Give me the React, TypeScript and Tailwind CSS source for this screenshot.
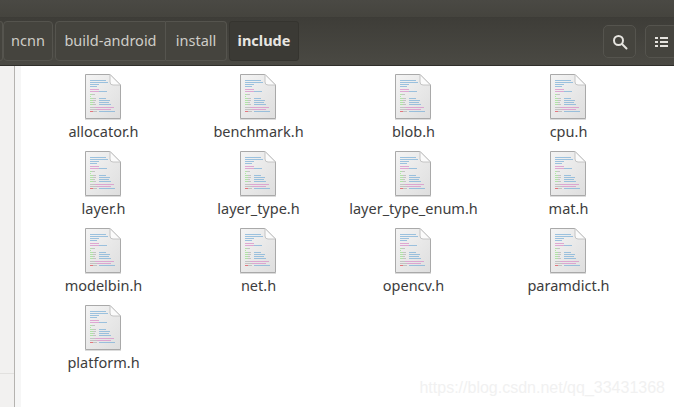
const files = [
  "allocator.h", "benchmark.h", "blob.h", "cpu.h",
  "layer.h", "layer_type.h", "layer_type_enum.h", "mat.h",
  "modelbin.h", "net.h", "opencv.h", "paramdict.h",
  "platform.h",
];

const blue = "#7fb2d8";
const pink = "#d890c8";
const green = "#9be08f";
const gray = "#b5b5b5";
const red = "#e0505a";

// [y, x, width, colour]
const codeLines: [number, number, number, string][] = [
  [6, 5, 16, blue], [8, 5, 18, blue], [10, 5, 9, blue], [12, 5, 7, blue],
  [15, 5, 9, pink], [17, 5, 9, pink], [17, 14, 8, blue],
  [20, 5, 2, green], [20, 7, 3, gray], [22, 5, 1, green],
  [24, 5, 3, green], [24, 8, 3, gray], [24, 14, 7, blue],
  [26, 5, 3, green], [26, 8, 3, gray], [26, 14, 11, blue],
  [28, 5, 3, green], [28, 8, 2, gray], [28, 14, 10, blue],
  [30, 5, 3, green], [30, 8, 3, gray], [30, 14, 12, blue],
  [33, 5, 5, gray], [33, 10, 19, pink], [35, 5, 7, gray], [35, 12, 14, pink],
  [37, 5, 3, red], [37, 8, 4, gray], [37, 14, 16, blue],
];

function FileIcon() {
  return (
    <svg width="37" height="46" viewBox="0 0 37 46" className="shrink-0">
      <defs>
        <linearGradient id="page" x1="0" y1="0" x2="1" y2="1">
          <stop offset="0" stopColor="#f4f4f4" />
          <stop offset="1" stopColor="#dedede" />
        </linearGradient>
      </defs>
      <path d="M0.5 0.5H25L35.5 11V44.5H0.5Z" fill="url(#page)" stroke="#a9a9a9" />
      <path d="M0 45.5H36" stroke="#dcdcdc" />
      <path d="M25 0.5V8Q25 11 28 11H35.5Z" fill="#fbfbfb" stroke="#c4c4c4" />
      {codeLines.map(([y, x, w, c], i) => (
        <rect key={i} x={x} y={y} width={w} height="1" fill={c} opacity="0.75" />
      ))}
    </svg>
  );
}

export default function App() {
  return (
    <div className="w-[674px] h-[407px] overflow-hidden flex flex-col relative bg-white font-['Noto_Sans',sans-serif]">
      <div className="h-[18px] shrink-0 bg-gradient-to-b from-[#4a4944] to-[#45443e] border-b border-[#3d3c37]" />
      <div className="h-[48px] shrink-0 flex items-start justify-between bg-gradient-to-b from-[#3e3d38] to-[#4a4943] border-b border-[#2f2e2a] pt-[3px]">
        <div className="flex items-stretch h-[40px] text-[14.5px] text-[#cfcdc8]">
          <div className="w-[3px] border-y border-r border-[#55544e] bg-[#45443e] rounded-r-[3px]" />
          <div className="w-[50px] flex items-center justify-center border border-[#55544e] bg-[#45443e] rounded-[4px]">ncnn</div>
          <div className="w-[111px] ml-[2px] flex items-center justify-center border border-[#55544e] bg-[#45443e] rounded-l-[4px]">build-android</div>
          <div className="w-[61px] flex items-center justify-center border border-l-0 border-[#55544e] bg-[#45443e] rounded-r-[4px]">install</div>
          <div className="w-[70px] ml-[2px] flex items-center justify-center border border-[#35342f] bg-[#3b3a35] rounded-[3px] font-bold text-[#e8e6e2]">
            include
          </div>
        </div>
        <div className="flex gap-[9px] mr-[-4px] mt-[4px]">
          <div className="w-[33px] h-[33px] flex items-center justify-center border border-[#55544e] bg-[#45443e] rounded-[5px]">
            <svg width="16" height="16" viewBox="0 0 16 16" fill="none" stroke="#e6e4df" strokeWidth="2">
              <circle cx="6.5" cy="6.5" r="4.5" />
              <path d="M10 10L14.5 14.5" strokeLinecap="round" />
            </svg>
          </div>
          <div className="w-[33px] h-[33px] flex items-center justify-center border border-[#55544e] bg-[#45443e] rounded-[5px]">
            <svg width="13" height="12" viewBox="0 0 13 12" fill="#e6e4df">
              <rect x="0" y="1" width="3" height="2" />
              <rect x="5" y="1" width="8" height="2" />
              <rect x="0" y="5" width="3" height="2" />
              <rect x="5" y="5" width="8" height="2" />
              <rect x="0" y="9" width="3" height="2" />
              <rect x="5" y="9" width="8" height="2" />
            </svg>
          </div>
        </div>
      </div>
      <div className="flex flex-1 min-h-0">
        <div className="w-[15px] shrink-0 bg-[#f2f1f0] border-r border-[#b5b3b0] flex flex-col">
          <div className="h-[308px] border-b border-[#e2e1df]" />
        </div>
        <div className="w-[6px] shrink-0 bg-[#f6f6f6]" />
        <div className="flex-1 grid grid-cols-[155px_155px_155px_155px] auto-rows-[77px] pl-[5px] pt-[8px] content-start">
          {files.map((f) => (
            <div key={f} className="flex flex-col items-center">
              <FileIcon />
              <span className="text-[14.5px] leading-[20px] mt-[1px] text-[#3d3d3d]">{f}</span>
            </div>
          ))}
        </div>
      </div>
      <div className="absolute right-[9px] top-[379px] font-['Liberation_Sans',sans-serif] text-[16px] leading-[18px] text-[#f1f1f1]">
        https://blog.csdn.net/qq_33431368
      </div>
    </div>
  );
}
